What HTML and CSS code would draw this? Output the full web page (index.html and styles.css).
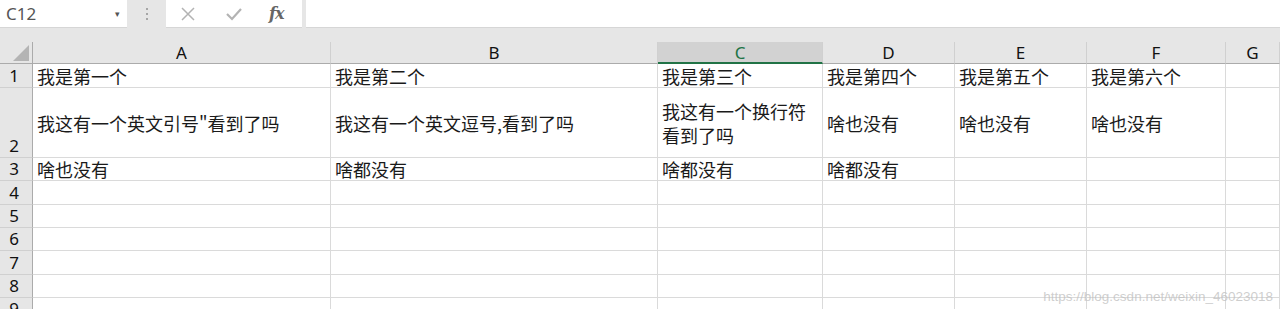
FILE: index.html
```html
<!DOCTYPE html>
<html lang="zh-CN">

<head>
	<meta charset="utf-8">
	<title>Book1 - Excel</title>
	<link rel="stylesheet" href="styles.css">
</head>

<body>

	<div class="formula-bar">
		<div class="name-box">
			<span>C12</span>
			<span class="drop">&#9662;</span>
		</div>
		<div class="grip">
			<i></i><i></i><i></i>
		</div>
		<div class="fx-buttons">
			<svg class="btn" width="18" height="18" viewBox="0 0 18 18"><path d="M3 3 L15 15 M15 3 L3 15" stroke="#b3b3b3" stroke-width="1.5" fill="none"/></svg>
			<svg class="btn" width="20" height="18" viewBox="0 0 20 18"><path d="M3 9 L8 14 L17 4" stroke="#b3b3b3" stroke-width="2.2" fill="none"/></svg>
			<span class="fx">fx</span>
		</div>
		<div class="formula-input"></div>
	</div>

	<div class="sheet">
		<div class="corner"><span class="tri"></span></div>
		<div class="col-head">A</div>
		<div class="col-head">B</div>
		<div class="col-head active">C</div>
		<div class="col-head">D</div>
		<div class="col-head">E</div>
		<div class="col-head">F</div>
		<div class="col-head">G</div>

		<div class="row-head">1</div>
		<div class="cell">我是第一个</div>
		<div class="cell">我是第二个</div>
		<div class="cell">我是第三个</div>
		<div class="cell">我是第四个</div>
		<div class="cell">我是第五个</div>
		<div class="cell">我是第六个</div>
		<div class="cell"></div>

		<div class="row-head">2</div>
		<div class="cell">我这有一个英文引号"看到了吗</div>
		<div class="cell">我这有一个英文逗号,看到了吗</div>
		<div class="cell wrap">我这有一个换行符<br>看到了吗</div>
		<div class="cell">啥也没有</div>
		<div class="cell">啥也没有</div>
		<div class="cell">啥也没有</div>
		<div class="cell"></div>

		<div class="row-head">3</div>
		<div class="cell">啥也没有</div>
		<div class="cell">啥都没有</div>
		<div class="cell">啥都没有</div>
		<div class="cell">啥都没有</div>
		<div class="cell"></div>
		<div class="cell"></div>
		<div class="cell"></div>

		<div class="row-head">4</div>
		<div class="cell"></div><div class="cell"></div><div class="cell"></div><div class="cell"></div><div class="cell"></div><div class="cell"></div><div class="cell"></div>
		<div class="row-head">5</div>
		<div class="cell"></div><div class="cell"></div><div class="cell"></div><div class="cell"></div><div class="cell"></div><div class="cell"></div><div class="cell"></div>
		<div class="row-head">6</div>
		<div class="cell"></div><div class="cell"></div><div class="cell"></div><div class="cell"></div><div class="cell"></div><div class="cell"></div><div class="cell"></div>
		<div class="row-head">7</div>
		<div class="cell"></div><div class="cell"></div><div class="cell"></div><div class="cell"></div><div class="cell"></div><div class="cell"></div><div class="cell"></div>
		<div class="row-head">8</div>
		<div class="cell"></div><div class="cell"></div><div class="cell"></div><div class="cell"></div><div class="cell"></div><div class="cell"></div><div class="cell"></div>
		<div class="row-head">9</div>
		<div class="cell"></div><div class="cell"></div><div class="cell"></div><div class="cell"></div><div class="cell"></div><div class="cell"></div><div class="cell"></div>
	</div>

	<div class="watermark">https://blog.csdn.net/weixin_46023018</div>

</body>

</html>
```

FILE: styles.css
```css
:root {
	--chrome-color: #e6e6e6;
	--grid-color: #dadada;
	--head-border: #ababab;
	--text-color: #222222;
	--accent-color: #217346;
}
html, body { margin: 0; padding: 0; }
body {
	background: var(--chrome-color);
	width: 1280px;
	height: 309px;
	overflow: hidden;
	position: relative;
	font-family: "Noto Sans", "Noto Sans CJK SC", sans-serif;
	color: var(--text-color);
}

/* formula bar */
.formula-bar {
	display: flex;
	height: 28px;
	margin-bottom: 14px;
}
.name-box {
	width: 127px;
	background: #fff;
	border-bottom: 1px solid #d6d6d6;
	display: flex;
	align-items: center;
	justify-content: space-between;
	padding: 0 7px 0 6px;
	box-sizing: border-box;
	font-size: 17px;
	color: #555;
}
.drop { font-size: 9px; color: #555; }
.grip {
	width: 39px;
	display: flex;
	flex-direction: column;
	align-items: center;
	justify-content: center;
	gap: 3px;
}
.grip i { width: 2px; height: 2px; background: #a6a6a6; display: block; }
.fx-buttons {
	width: 136px;
	background: #fff;
	border-bottom: 1px solid #d6d6d6;
	display: flex;
	align-items: center;
	padding-left: 13px;
	box-sizing: border-box;
	gap: 27px;
}
.fx {
	font-family: "DejaVu Serif", serif;
	font-style: italic;
	font-weight: bold;
	font-size: 16px;
	color: #666;
	margin-left: -2px;
	letter-spacing: -1px;
}
.formula-input {
	flex: 1;
	margin-left: 4px;
	background: #fff;
	border-bottom: 1px solid #d6d6d6;
}

/* sheet grid */
.sheet {
	display: grid;
	grid-template-columns: 33px 298px 327px 165px 132px 132px 139px 54px;
	grid-template-rows: 22px 24px 70px 23px 24px 23px 23px 24px 23px 23px;
	background: #fff;
}
.corner {
	background: var(--chrome-color);
	border-bottom: 1px solid var(--head-border);
	border-right: 1px solid var(--head-border);
	position: relative;
}
.tri {
	position: absolute;
	right: 3px;
	bottom: 2px;
	width: 0;
	height: 0;
	border-left: 16px solid transparent;
	border-bottom: 16px solid #b4b4b4;
}
.col-head {
	background: var(--chrome-color);
	border-bottom: 1px solid var(--head-border);
	border-right: 1px solid #d0d0d0;
	display: flex;
	align-items: center;
	justify-content: center;
	font-size: 17px;
	color: #111;
	box-sizing: border-box;
}
.col-head.active {
	background: #d2d2d2;
	border-bottom: 2px solid var(--accent-color);
	color: var(--accent-color);
}
.row-head {
	background: var(--chrome-color);
	border-right: 1px solid var(--head-border);
	border-bottom: 1px solid #d0d0d0;
	display: flex;
	align-items: flex-end;
	justify-content: center;
	padding-right: 4px;
	font-size: 17px;
	line-height: 22px;
	color: #111;
	overflow: hidden;
}
.cell {
	border-right: 1px solid var(--grid-color);
	border-bottom: 1px solid var(--grid-color);
	display: flex;
	align-items: center;
	padding-left: 4px;
	font-family: "Noto Sans CJK SC", sans-serif;
	font-size: 18px;
	line-height: 22px;
	color: #1a1a1a;
	white-space: nowrap;
	min-width: 0;
}
.cell.wrap { line-height: 24px; }

.watermark {
	position: absolute;
	right: 7px;
	bottom: 5px;
	font-family: "Liberation Sans", sans-serif;
	font-size: 13.5px;
	color: rgba(190, 190, 190, 0.75);
}
```
